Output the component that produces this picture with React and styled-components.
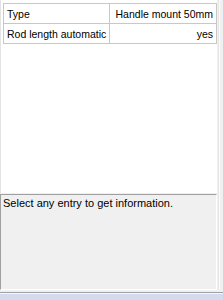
import React from 'react';
import styled, { createGlobalStyle } from 'styled-components';

const Global = createGlobalStyle`
  html, body {
    margin: 0;
    padding: 0;
    background: #f0f0f0;
  }
`;

const Frame = styled.div`
  width: 223px;
  height: 300px;
  display: flex;
  flex-direction: column;
  font-family: "Liberation Sans", Arial, sans-serif;
  font-size: 10.5px;
  color: #000;
  overflow: hidden;
`;

const Body = styled.div`
  flex: 0 0 290px;
  display: flex;
`;

const Column = styled.div`
  width: 217px;
  display: flex;
  flex-direction: column;
  gap: 1px;
`;

const Edge = styled.div`
  flex: 1;
  border-left: 1px solid #e6e6e6;
  margin-left: 1px;
  background: #f0f0f0;
  box-shadow: inset 1px 0 0 #fbfbfb;
`;

const ListPanel = styled.div`
  height: 193px;
  background: #fff;
  border-left: 1px solid #e3e3e3;
  box-sizing: border-box;
  padding: 3px 0 0 2px;
`;

const Grid = styled.table`
  border-collapse: collapse;
  table-layout: fixed;
  width: 214px;
`;

const Cell = styled.td`
  border: 1px solid #c8c8c8;
  height: 19px;
  padding: 0 3px;
  white-space: nowrap;
  overflow: hidden;
  text-overflow: clip;
  text-align: ${(p) => (p.$right ? 'right' : 'left')};
  width: ${(p) => (p.$right ? 'auto' : '99px')};
`;

const InfoPanel = styled.div`
  height: 96px;
  box-sizing: border-box;
  background: #f0f0f0;
  border-top: 1px solid #a0a0a0;
  border-left: 1px solid #a0a0a0;
  border-right: 1px solid #fff;
  border-bottom: 1px solid #fff;
  padding: 2px 2px;
  font-size: 11px;
`;

const Status = styled.div`
  flex: 1;
  margin-top: 2px;
  border-top: 1px solid #a0a0a0;
  box-shadow: inset 0 1px 0 #f8f8f8;
  background: #d4dbee;
`;

const rows = [
  ['Type', 'Handle mount 50mm'],
  ['Rod length automatic', 'yes'],
];

export default function App() {
  return (
    <Frame>
      <Global />
      <Body>
        <Column>
          <ListPanel>
            <Grid>
              <tbody>
                {rows.map(([k, v]) => (
                  <tr key={k}>
                    <Cell>{k}</Cell>
                    <Cell $right>{v}</Cell>
                  </tr>
                ))}
              </tbody>
            </Grid>
          </ListPanel>
          <InfoPanel>Select any entry to get information.</InfoPanel>
        </Column>
        <Edge />
      </Body>
      <Status />
    </Frame>
  );
}
